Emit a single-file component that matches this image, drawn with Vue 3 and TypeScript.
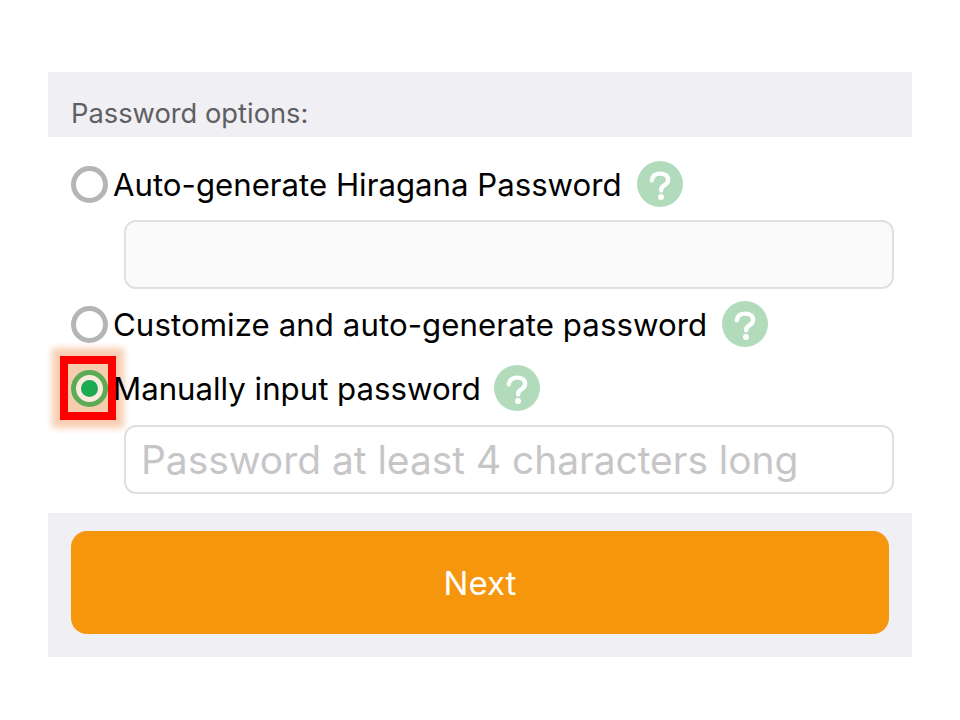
<script setup lang="ts">
interface PasswordOption {
  label: string
  selected: boolean
  annotated?: boolean
  inputPlaceholder?: string
  showInput: boolean
  rowClass: string
}

const options: PasswordOption[] = [
  { label: 'Auto-generate Hiragana Password', selected: false, showInput: true, rowClass: 'row-auto' },
  { label: 'Customize and auto-generate password', selected: false, showInput: false, rowClass: 'row-custom' },
  {
    label: 'Manually input password',
    selected: true,
    annotated: true,
    showInput: true,
    inputPlaceholder: 'Password at least 4 characters long',
    rowClass: 'row-manual'
  }
]
</script>

<template>
  <div class="page">
    <div class="panel">
      <div class="panel-header">Password options:</div>

      <div class="option-list">
        <div v-for="option in options" :key="option.label" class="option" :class="option.rowClass">
          <div class="option-row">
            <span class="radio" :class="{ selected: option.selected }">
              <span v-if="option.selected" class="radio-dot"></span>
              <span v-if="option.annotated" class="annotation"></span>
            </span>
            <span class="option-label">{{ option.label }}</span>
            <span class="help">
              <svg viewBox="0 0 46 46" width="46" height="46">
                <circle cx="23" cy="23" r="23" fill="#b2dbbc" />
                <path
                  d="M14.800 19.400c.4-4.500 3.800-6.800 8.300-6.800 4.700 0 8 2.600 8 6.200 0 2.600-1.300 4.100-3.800 5.500-2.300 1.300-3.100 2.200-3.100 4.200v.9"
                  fill="none"
                  stroke="#fff"
                  stroke-width="4.400"
                  stroke-linecap="round"
                />
                <circle cx="24" cy="36" r="3" fill="#fff" />
              </svg>
            </span>
          </div>
          <div v-if="option.showInput" class="input-wrap">
            <input
              class="text-input"
              :class="{ readonly: !option.inputPlaceholder }"
              type="text"
              :placeholder="option.inputPlaceholder"
              :readonly="!option.inputPlaceholder"
            />
          </div>
        </div>
      </div>

      <div class="panel-footer">
        <button class="next-button" type="button">Next</button>
      </div>
    </div>
  </div>
</template>

<style scoped>
.page {
  width: 960px;
  height: 720px;
  padding: 72px 48px 0;
  box-sizing: border-box;
  background: #fff;
  font-family: Inter, "Liberation Sans", sans-serif;
}

.panel {
  width: 864px;
  background: #fff;
}

.panel-header {
  height: 65px;
  box-sizing: border-box;
  padding: 26px 0 0 23px;
  background: #efeff4;
  color: #5f5f63;
  font-size: 27.3px;
  line-height: 32px;
}

.option-list {
  height: 376px;
  box-sizing: border-box;
  padding-top: 24px;
}

.option-row {
  display: flex;
  align-items: center;
  height: 46px;
  padding-left: 23px;
  isolation: isolate;
}

.row-custom {
  margin-top: 12px;
}

.row-custom .option-label {
  letter-spacing: 0.08px;
}

.row-manual {
  margin-top: 18px;
}

.row-manual .help {
  margin-left: 13px;
}

.row-manual .input-wrap {
  margin-top: 14px;
}

.radio {
  position: relative;
  flex: none;
  display: flex;
  align-items: center;
  justify-content: center;
  width: 37px;
  height: 37px;
  box-sizing: border-box;
  border: 5px solid #b5b5b5;
  border-radius: 50%;
}

.radio.selected {
  border-color: #5dab55;
  background: #fbeadd;
}

.radio-dot {
  width: 17px;
  height: 17px;
  border-radius: 50%;
  background: #1cab50;
}

/* highlight drawn over the screenshot */
.annotation {
  position: absolute;
  z-index: -1;
  left: -16px;
  top: -18.5px;
  width: 56px;
  height: 64px;
  box-sizing: border-box;
  border: 8px solid #f00;
  background: #f7cdb0;
  box-shadow: 0 0 7px 8px #f7cdb0;
}

.option-label {
  margin-left: 5px;
  padding-top: 2px;
  color: #000;
  font-size: 31.2px;
  line-height: 40px;
  white-space: nowrap;
}

.help {
  display: flex;
  flex: none;
  margin-left: 15px;
}

.input-wrap {
  margin-top: 13px;
  padding-left: 76px;
}

.text-input {
  display: block;
  width: 770px;
  height: 69px;
  box-sizing: border-box;
  padding: 0 15px;
  border: 2px solid #e0e0e0;
  border-radius: 12px;
  outline: none;
  background: #fff;
  color: #000;
  font-family: inherit;
  font-size: 38.9px;
}

.text-input.readonly {
  background: #fafafa;
}

.text-input::placeholder {
  color: #c6c6c8;
  opacity: 1;
}

.panel-footer {
  height: 144px;
  box-sizing: border-box;
  padding: 18px 23px 23px;
  background: #efeff4;
}

.next-button {
  display: block;
  width: 818px;
  height: 103px;
  border: none;
  border-radius: 16px;
  background: #f5960d;
  color: #fff;
  font-family: inherit;
  font-size: 33px;
}
</style>
